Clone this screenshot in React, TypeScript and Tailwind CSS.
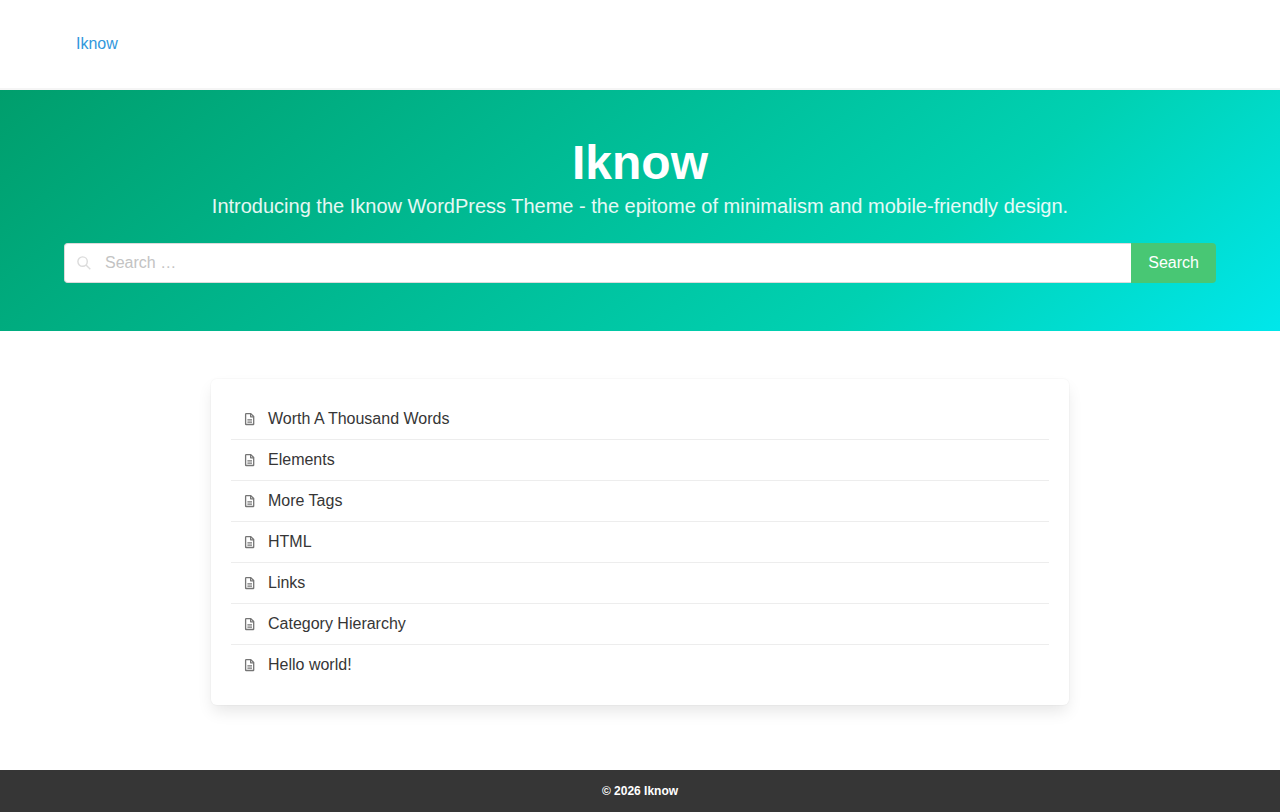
import { useState } from "react";

const articles = [
  "Worth A Thousand Words",
  "Elements",
  "More Tags",
  "HTML",
  "Links",
  "Category Hierarchy",
  "Hello world!",
];

function SearchIcon() {
  return (
    <svg
      viewBox="0 0 16 16"
      className="h-4 w-4"
      fill="none"
      stroke="currentColor"
      strokeWidth="1.4"
      aria-hidden="true"
    >
      <circle cx="6.6" cy="6.6" r="4.7" />
      <path d="M10 10l4.3 4.3" />
    </svg>
  );
}

function FileIcon() {
  return (
    <svg
      viewBox="0 0 14 14"
      className="h-3.5 w-3.5 shrink-0 text-[#757575]"
      fill="none"
      stroke="currentColor"
      strokeLinejoin="round"
      aria-hidden="true"
    >
      <path
        strokeWidth="1.3"
        d="M3.2 1.6h4.6l2.9 2.9v7.4a.6.6 0 0 1-.6.6H3.2a.6.6 0 0 1-.6-.6V2.2a.6.6 0 0 1 .6-.6z"
      />
      <path strokeWidth="1.2" d="M7.6 1.7v3.1h3" />
      <path strokeWidth="1.2" d="M4.4 7.9h4.6M4.4 10.1h4.6" />
    </svg>
  );
}

function Header() {
  return (
    <header className="border-b-2 border-[#f5f5f5] bg-white px-16">
      <nav className="mx-auto flex h-22 max-w-6xl items-center">
        <a href="#" className="px-3 py-2 text-[#3298dc]">
          Iknow
        </a>
      </nav>
    </header>
  );
}

function Hero() {
  const [query, setQuery] = useState("");

  return (
    <section className="bg-[linear-gradient(141deg,#009e6c_0%,#00d1b2_71%,#00e7eb_100%)] px-16 py-12">
      <div className="mx-auto max-w-6xl">
        <div className="mb-6 text-center text-white">
          <h1 className="text-5xl leading-[50px] font-bold">Iknow</h1>
          <p className="pt-1.5 text-xl leading-[25px] text-white/90">
            Introducing the Iknow WordPress Theme - the epitome of minimalism
            and mobile-friendly design.
          </p>
        </div>
        <form
          role="search"
          className="flex h-10"
          onSubmit={(e) => e.preventDefault()}
        >
          <label className="flex flex-1 items-center rounded-l border border-r-0 border-[#dbdbdb] bg-white pl-[11px] text-[#dbdbdb]">
            <SearchIcon />
            <input
              type="search"
              aria-label="Search"
              placeholder="Search …"
              value={query}
              onChange={(e) => setQuery(e.target.value)}
              className="h-full min-w-0 flex-1 pl-[13px] text-[#363636] outline-none placeholder:text-[#c3c3c3]"
            />
          </label>
          <button
            type="submit"
            className="cursor-pointer rounded-r bg-[#48c774] px-[17px] text-white"
          >
            Search
          </button>
        </form>
      </div>
    </section>
  );
}

function ArticleList() {
  return (
    <ul className="mx-auto max-w-[858px] divide-y divide-[#ededed] rounded-md bg-white p-5 shadow-[0_8px_16px_-2px_rgba(10,10,10,0.1),0_0_0_1px_rgba(10,10,10,0.02)]">
      {articles.map((title) => (
        <li key={title}>
          <a
            href="#"
            className="flex items-center gap-[11px] px-3 py-2 text-[#363636] hover:bg-[#f5f5f5]"
          >
            <FileIcon />
            {title}
          </a>
        </li>
      ))}
    </ul>
  );
}

export default function App() {
  return (
    <div className="flex min-h-screen flex-col bg-white font-['Liberation_Sans',Arial,sans-serif] text-base text-[#4a4a4a]">
      <Header />
      <Hero />
      <main className="flex-1 px-16 pt-12 pb-16">
        <ArticleList />
      </main>
      <footer className="bg-[#363636] py-3 text-center text-xs leading-[18px] font-bold text-white">
        © 2026 Iknow
      </footer>
    </div>
  );
}
